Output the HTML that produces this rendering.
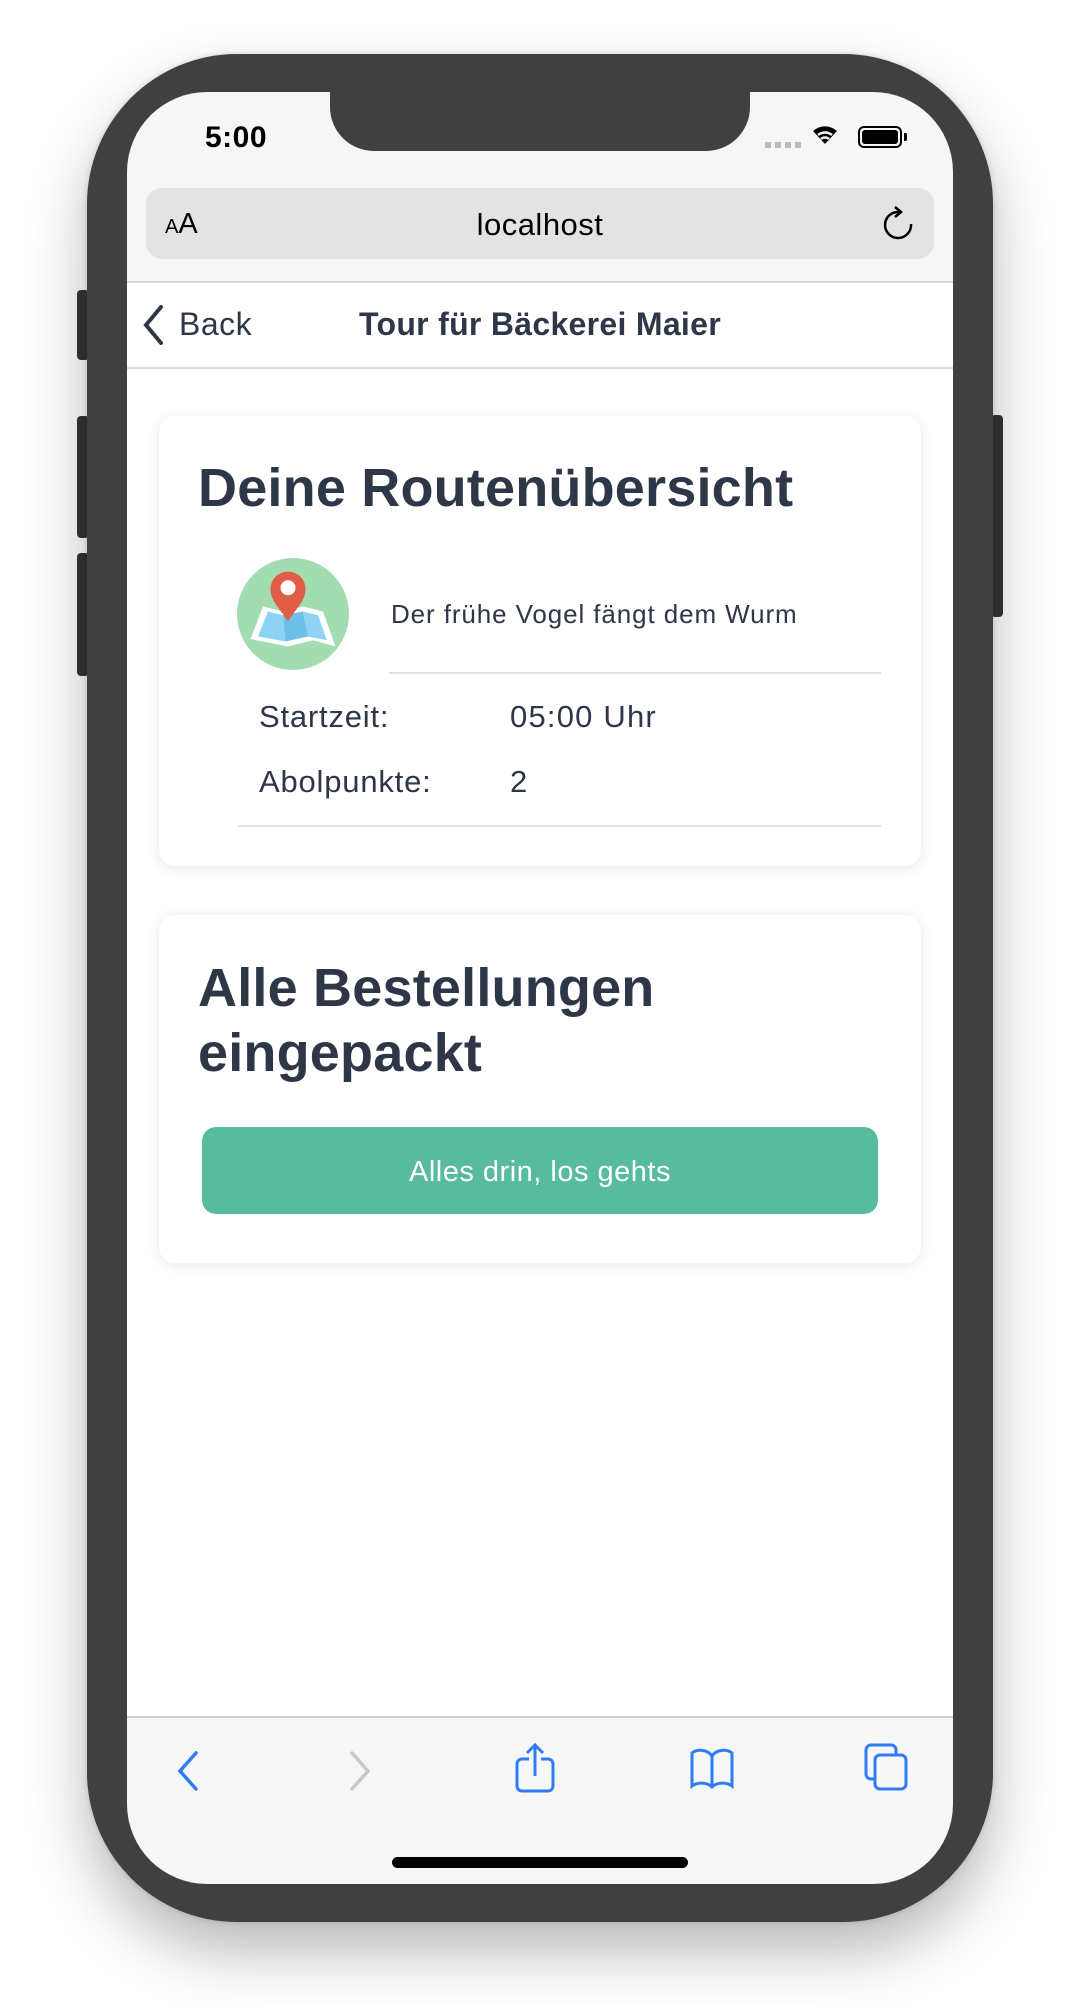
<!DOCTYPE html>
<html><head><meta charset="utf-8">
<style>
*{margin:0;padding:0;box-sizing:border-box}
body{width:1080px;height:2008px;background:#fff;position:relative;overflow:hidden;font-family:"Liberation Sans",sans-serif;color:#2d3748}
.abs{position:absolute}
.phone{left:87px;top:54px;width:906px;height:1868px;background:#404040;border-radius:150px;box-shadow:0 30px 60px rgba(0,0,0,.28),0 0 6px rgba(0,0,0,.15)}
.btn{background:#353535;border-radius:4px}
.screen{left:127px;top:92px;width:826px;height:1792px;background:#f6f6f6;border-radius:80px;overflow:hidden}
.notch{left:203px;top:-2px;width:420px;height:61px;background:#404040;border-radius:0 0 44px 44px}
.card{background:#fff;border-radius:16px;box-shadow:0 2px 14px rgba(0,0,0,.09)}
</style></head><body>
<div class="abs btn" style="left:77px;top:290px;width:12px;height:70px"></div>
<div class="abs btn" style="left:77px;top:416px;width:12px;height:122px"></div>
<div class="abs btn" style="left:77px;top:553px;width:12px;height:123px"></div>
<div class="abs btn" style="left:991px;top:415px;width:12px;height:202px"></div>
<div class="abs phone"></div>
<div class="abs screen">
  <div class="abs notch"></div>
  <div class="abs" style="left:78px;top:29px;font-size:30px;font-weight:bold;color:#000;letter-spacing:0.5px">5:00</div>
  <div class="abs" style="left:638px;top:50px;width:38px;height:6px;background:repeating-linear-gradient(90deg,#bbb 0 6px,transparent 6px 10px)"></div>
  <svg class="abs" style="left:683px;top:30px" width="30" height="24" viewBox="0 0 30 24"><path d="M15 22 L3 9 A18 18 0 0 1 27 9 Z" fill="#000"/><path d="M8 13 A11 11 0 0 1 22 13" stroke="#f6f6f6" stroke-width="2.5" fill="none"/><path d="M11 17 A6 6 0 0 1 19 17" stroke="#f6f6f6" stroke-width="2.5" fill="none"/></svg>
  <div class="abs" style="left:731px;top:34px;width:44px;height:22px;border:2px solid #000;border-radius:6px;padding:2px"><div style="width:100%;height:100%;background:#000;border-radius:3px"></div></div>
  <div class="abs" style="left:777px;top:41px;width:3px;height:8px;background:#000;border-radius:0 2px 2px 0"></div>
  <div class="abs" style="left:19px;top:96px;width:788px;height:71px;background:#e3e3e3;border-radius:16px"></div>
  <div class="abs" style="left:38px;top:116px;font-size:29px;color:#000"><span style="font-size:20px">A</span>A</div>
  <div class="abs" style="left:0;width:826px;top:115px;text-align:center;font-size:31px;color:#000;letter-spacing:0.5px">localhost</div>
  <svg class="abs" style="left:755px;top:114px" width="34" height="38" viewBox="0 0 34 38"><path d="M17 6 A13 13 0 1 0 29 18" stroke="#000" stroke-width="2.5" fill="none"/><path d="M13 1 L19 6 L13 11" stroke="#000" stroke-width="2.5" fill="none"/></svg>
  <div class="abs" style="left:0;top:189px;width:826px;height:88px;background:#fff;border-top:2px solid #d6d6d6;border-bottom:2px solid #dcdcdc"></div>
  <svg class="abs" style="left:14px;top:212px" width="24" height="42" viewBox="0 0 24 42"><path d="M20 3 L5 21 L20 39" stroke="#2d3748" stroke-width="4" fill="none" stroke-linecap="round"/></svg>
  <div class="abs" style="left:52px;top:214px;font-size:32px;color:#2d3748;letter-spacing:0.5px">Back</div>
  <div class="abs" style="left:0;width:826px;top:214px;text-align:center;font-size:32px;font-weight:bold;color:#2d3748;letter-spacing:0.3px">Tour für Bäckerei Maier</div>
  <div class="abs" style="left:0;top:278px;width:826px;height:1348px;background:#fff"></div>
  <div class="abs card" style="left:32px;top:324px;width:762px;height:450px">
    <div class="abs" style="left:39px;top:41px;font-size:54px;font-weight:bold;letter-spacing:0.2px">Deine Routenübersicht</div>
    <div class="abs" style="left:78px;top:142px;width:112px;height:112px;border-radius:50%;background:#a3dcb0"></div>
    <svg class="abs" style="left:84px;top:148px" width="100" height="100" viewBox="0 0 80 80"><path d="M16 34 L32 38 L48 34 L64 38 L74 66 L56 61 L36 66 L6 60 Z" fill="#fff"/><path d="M20 38 L32 41 L34 62 L12 58 Z" fill="#8fd3f4"/><path d="M32 41 L48 38 L52 58 L34 62 Z" fill="#6cc0e8"/><path d="M48 38 L60 41 L67 61 L52 58 Z" fill="#8fd3f4"/><path d="M36 46 C30 36 22 30 22 20 A14 14 0 0 1 50 20 C50 30 42 36 36 46 Z" fill="#e05d47"/><circle cx="36" cy="19" r="6" fill="#fff"/></svg>
    <div class="abs" style="left:232px;top:183px;font-size:26px;letter-spacing:0.9px">Der frühe Vogel fängt dem Wurm</div>
    <div class="abs" style="left:230px;top:256px;width:492px;height:2px;background:#e2e2e2"></div>
    <div class="abs" style="left:100px;top:283px;font-size:31px;letter-spacing:0.8px">Startzeit:</div>
    <div class="abs" style="left:351px;top:283px;font-size:31px;letter-spacing:1.2px">05:00 Uhr</div>
    <div class="abs" style="left:100px;top:348px;font-size:31px;letter-spacing:0.8px">Abolpunkte:</div>
    <div class="abs" style="left:351px;top:348px;font-size:31px">2</div>
    <div class="abs" style="left:79px;top:409px;width:643px;height:2px;background:#e2e2e2"></div>
  </div>
  <div class="abs card" style="left:32px;top:823px;width:762px;height:348px">
    <div class="abs" style="left:39px;top:41px;font-size:54px;font-weight:bold;line-height:65px;letter-spacing:0.2px">Alle Bestellungen<br>eingepackt</div>
    <div class="abs" style="left:43px;top:212px;width:676px;height:87px;background:#58bb9d;border-radius:14px;color:#fff;font-size:29px;text-align:center;line-height:91px;letter-spacing:0.5px">Alles drin, los gehts</div>
  </div>
  <div class="abs" style="left:0;top:1624px;width:826px;height:2px;background:#cfcfcf"></div>
  <svg class="abs" style="left:46px;top:1657px" width="30" height="44" viewBox="0 0 30 44"><path d="M23 4 L7 22 L23 40" stroke="#2f7cf6" stroke-width="3.5" fill="none" stroke-linecap="round"/></svg>
  <svg class="abs" style="left:218px;top:1657px" width="30" height="44" viewBox="0 0 30 44"><path d="M7 4 L23 22 L7 40" stroke="#c8c8c8" stroke-width="3.5" fill="none" stroke-linecap="round"/></svg>
  <svg class="abs" style="left:387px;top:1650px" width="42" height="52" viewBox="0 0 42 52"><path d="M15 17 H8 A5 5 0 0 0 3 22 V44 A5 5 0 0 0 8 49 H34 A5 5 0 0 0 39 44 V22 A5 5 0 0 0 34 17 H27" stroke="#2f7cf6" stroke-width="3" fill="none"/><path d="M21 34 V3 M13 11 L21 3 L29 11" stroke="#2f7cf6" stroke-width="3" fill="none"/></svg>
  <svg class="abs" style="left:562px;top:1654px" width="46" height="44" viewBox="0 0 46 44"><path d="M23 10 C18 3 8 3 3 7 V40 C8 36 18 36 23 41 C28 36 38 36 43 40 V7 C38 3 28 3 23 10 Z M23 10 V41" stroke="#2f7cf6" stroke-width="3" fill="none"/></svg>
  <svg class="abs" style="left:736px;top:1650px" width="46" height="50" viewBox="0 0 46 50"><rect x="3" y="3" width="30" height="34" rx="5" stroke="#2f7cf6" stroke-width="3" fill="#f6f6f6"/><rect x="12" y="13" width="31" height="34" rx="5" stroke="#2f7cf6" stroke-width="3" fill="#f6f6f6"/></svg>
  <div class="abs" style="left:265px;top:1765px;width:296px;height:11px;background:#000;border-radius:6px"></div>
</div>
</body></html>
